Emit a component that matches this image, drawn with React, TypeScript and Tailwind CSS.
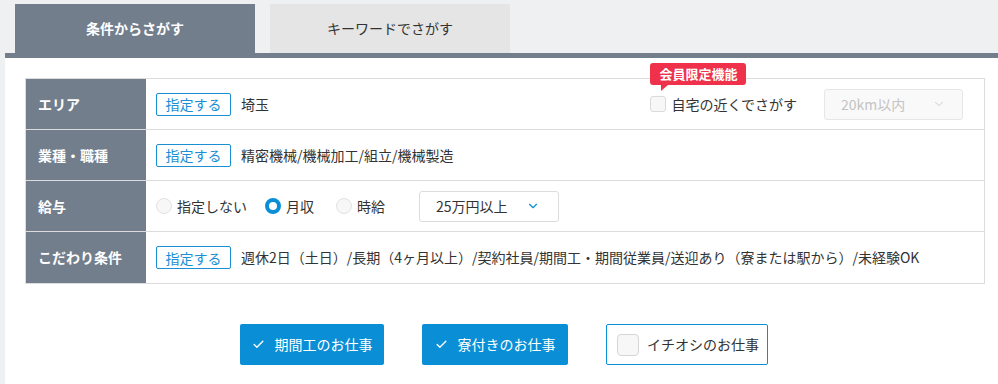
import { Check, ChevronDown } from 'lucide-react';

const font = { fontFamily: '"Noto Sans CJK JP", "Noto Sans", sans-serif' };

function SpecifyButton() {
  return (
    <button className="h-[23px] w-[75px] shrink-0 rounded-[2px] border border-[#1a8fd4] bg-white text-[14px] leading-none text-[#1a8fd4]">
      指定する
    </button>
  );
}

function Radio({ label, checked }: { label: string; checked?: boolean }) {
  return (
    <label className="flex items-center gap-[5px]">
      <span
        className={
          checked
            ? 'h-4 w-4 rounded-full border-[4px] border-[#0a8fd6] bg-white'
            : 'h-4 w-4 rounded-full border border-[#e2e2e2] bg-[#f7f7f7]'
        }
      />
      <span className="text-[14px] text-[#333]">{label}</span>
    </label>
  );
}

function Row({ label, children, last }: { label: string; children: React.ReactNode; last?: boolean }) {
  return (
    <div className={`flex h-[51px] ${last ? '' : 'border-b border-[#dcdcdc]'}`}>
      <div className="flex w-[120px] shrink-0 items-center bg-[#737e8c] pl-[12px] text-[14px] font-bold text-white">
        {label}
      </div>
      <div className="flex flex-1 items-center pl-[10px] pr-[21px] text-[14px] text-[#333]">{children}</div>
    </div>
  );
}

export default function App() {
  return (
    <div className="min-h-[384px] w-[998px] overflow-hidden bg-[#eff0f2] pl-[5px]" style={font}>
      <div className="flex h-[53px] items-end gap-[15px] pl-[10px]">
        <div className="flex h-[49px] w-[240px] items-center justify-center bg-[#737e8c] text-[14px] font-bold text-white">
          条件からさがす
        </div>
        <div className="flex h-[49px] w-[240px] items-center justify-center bg-[#e5e5e5] text-[14px] text-[#333]">
          キーワードでさがす
        </div>
      </div>
      <div className="h-[331px] border-t-[5px] border-[#737e8c] bg-white px-[20px] pt-[20px]">
        <div className="w-[960px] border border-[#dcdcdc]">
          <Row label="エリア">
            <SpecifyButton />
            <span className="ml-[10px]">埼玉</span>
            <div className="relative ml-auto flex items-center">
              <div className="absolute -top-[26px] left-0 h-[22px] rounded-[3px] bg-[#f0314b] px-[9px] text-[13px] font-bold leading-[22px] text-white">
                会員限定機能
                <span className="absolute -bottom-[6px] left-[11px] h-0 w-0 border-r-[7px] border-t-[6px] border-r-transparent border-t-[#f0314b]" />
              </div>
              <span className="h-4 w-4 rounded-[3px] border border-[#dadada] bg-[#f7f7f7]" />
              <span className="ml-[5px] text-[14px] text-[#333]">自宅の近くでさがす</span>
              <div className="ml-[27px] flex h-[31px] w-[139px] items-center justify-between rounded-[3px] border border-[#e6e6e6] bg-[#f9f9f9] pl-[16px] pr-[16px] text-[#c4c4c4]">
                <span>20km以内</span>
                <ChevronDown className="h-[14px] w-[14px]" strokeWidth={1.5} />
              </div>
            </div>
          </Row>
          <Row label="業種・職種">
            <SpecifyButton />
            <span className="ml-[10px]">精密機械/機械加工/組立/機械製造</span>
          </Row>
          <Row label="給与">
            <Radio label="指定しない" />
            <span className="ml-[18px]">
              <Radio label="月収" checked />
            </span>
            <span className="ml-[22px]">
              <Radio label="時給" />
            </span>
            <div className="ml-[34px] flex h-[31px] w-[140px] items-center justify-between rounded-[3px] border border-[#dcdcdc] pl-[16px] pr-[18px] text-[#333]">
              <span>25万円以上</span>
              <ChevronDown className="h-[14px] w-[14px] text-[#0a8fd6]" strokeWidth={2} />
            </div>
          </Row>
          <Row label="こだわり条件" last>
            <SpecifyButton />
            <span className="ml-[10px]">週休2日（土日）/長期（4ヶ月以上）/契約社員/期間工・期間従業員/送迎あり（寮または駅から）/未経験OK</span>
          </Row>
        </div>
        <div className="mt-[40px] flex justify-center gap-[38px] pl-[5px]">
          <button className="flex h-[41px] w-[144px] items-center justify-center gap-[10px] rounded-[2px] bg-[#0a8fd6] text-[14px] text-white">
            <Check className="h-[13px] w-[13px]" strokeWidth={2.5} />
            期間工のお仕事
          </button>
          <button className="flex h-[41px] w-[146px] items-center justify-center gap-[10px] rounded-[2px] bg-[#0a8fd6] text-[14px] text-white">
            <Check className="h-[13px] w-[13px]" strokeWidth={2.5} />
            寮付きのお仕事
          </button>
          <button className="flex h-[41px] w-[162px] items-center gap-[8px] rounded-[2px] border border-[#0a8fd6] bg-white pl-[10px] text-[14px] text-[#333]">
            <span className="h-[22px] w-[22px] rounded-[4px] border border-[#d6d6d6] bg-[#f7f7f7]" />
            イチオシのお仕事
          </button>
        </div>
      </div>
    </div>
  );
}
